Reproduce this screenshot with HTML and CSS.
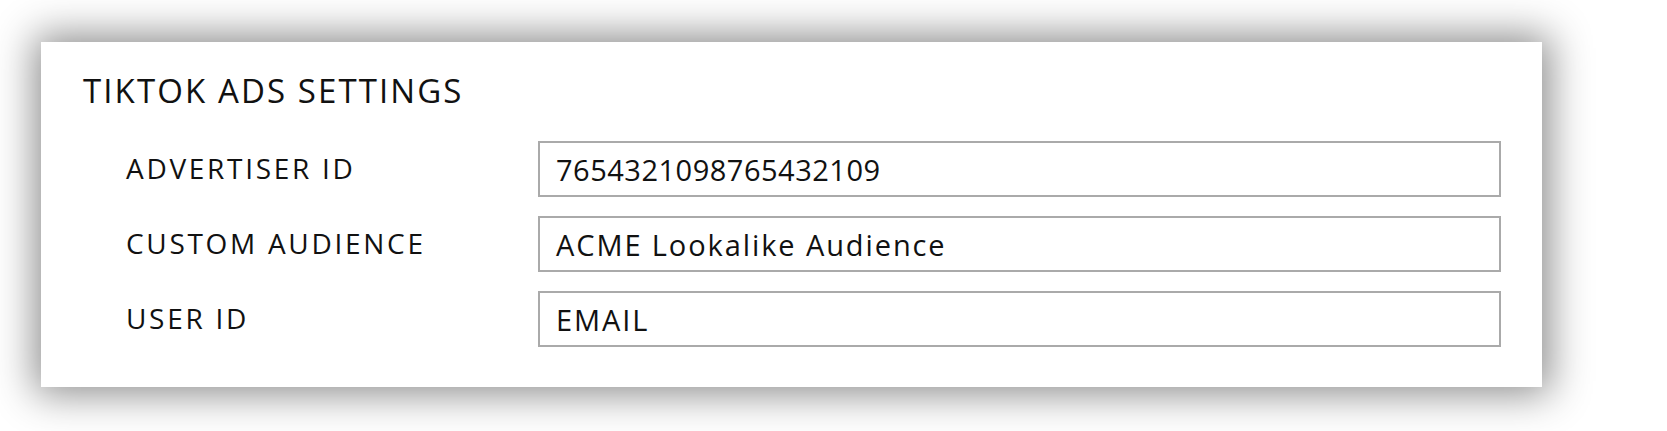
FILE: index.html
```html
<!DOCTYPE html>
<html lang="en">
<head>
<meta charset="utf-8">
<title>TikTok Ads Settings</title>
<link rel="stylesheet" href="styles.css">
</head>
<body>
<main class="page">
  <section class="card">
    <h1 class="card-title">TIKTOK ADS SETTINGS</h1>
    <div class="form">
      <div class="row">
        <label class="label">ADVERTISER ID</label>
        <div class="field"><span class="num">7654321098765432109</span></div>
      </div>
      <div class="row">
        <label class="label">CUSTOM AUDIENCE</label>
        <div class="field">ACME Lookalike Audience</div>
      </div>
      <div class="row">
        <label class="label">USER ID</label>
        <div class="field">EMAIL</div>
      </div>
    </div>
  </section>
</main>
</body>
</html>
```
FILE: styles.css
```css
html, body {
  margin: 0;
  padding: 0;
  background: #ffffff;
}
body {
  font-family: "Open Sans", "Liberation Sans", sans-serif;
  color: #111111;
}
.page {
  box-sizing: border-box;
  width: 1667px;
  height: 431px;
  padding: 42px 0 0 41px;
  background: #ffffff;
}
.card {
  box-sizing: border-box;
  width: 1501px;
  height: 345px;
  background: #ffffff;
  box-shadow: 1px 0 38px 7px rgba(0, 0, 0, 0.45);
  padding: 29px 41px 0 42px;
}
.card-title {
  margin: 0;
  font-size: 33px;
  font-weight: 400;
  line-height: 40px;
  letter-spacing: 2.1px;
}
.form {
  margin-top: 30px;
  display: flex;
  flex-direction: column;
  gap: 19px;
  padding-left: 43px;
}
.row {
  display: grid;
  grid-template-columns: 412px 963px;
  align-items: center;
}
.label {
  font-size: 28px;
  letter-spacing: 2.7px;
  line-height: 34px;
  margin-top: -2px;
}
.field {
  box-sizing: border-box;
  height: 56px;
  border: 2px solid #aaaaaa;
  padding: 0 16px;
  display: flex;
  align-items: center;
  font-size: 29px;
  letter-spacing: 1.9px;
}
.num {
  letter-spacing: 0.5px;
}
```
